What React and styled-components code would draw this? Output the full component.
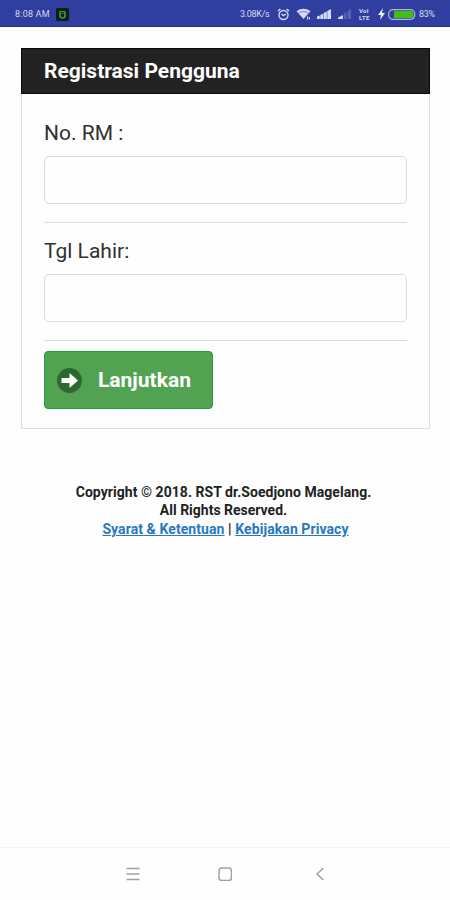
import React from 'react';
import styled, { createGlobalStyle, css } from 'styled-components';

const GlobalStyle = createGlobalStyle`
  * {
    margin: 0;
    padding: 0;
    box-sizing: border-box;
  }

  body {
    background: #fefefe;
    color: #222;
    font-family: Roboto, 'Liberation Sans', sans-serif;
  }
`;

const Screen = styled.div`
  display: flex;
  flex-direction: column;
  height: 900px;
  overflow: hidden;
`;

const StatusBar = styled.header`
  display: flex;
  flex: none;
  align-items: center;
  justify-content: space-between;
  height: 27px;
  padding: 2px 14px 0 15px;
  background: #303f9f;
  border-bottom: 1px solid #26348f;
  color: #d5d9f2;
`;

const StatusGroup = styled.div`
  display: flex;
  align-items: center;
`;

const StatusText = styled.span`
  width: ${props => props.$width}px;
  margin-left: ${props => props.$gap || 0}px;
  font-size: 9px;
  line-height: 12px;
  letter-spacing: ${props => props.$spacing || 0}px;
  white-space: nowrap;
`;

const StatusIcon = styled.svg`
  display: block;
  flex: none;
  margin-left: ${props => props.$gap || 0}px;
`;

const NetworkType = styled.span`
  display: flex;
  flex-direction: column;
  width: 13px;
  margin-left: 7px;
  font-size: 6px;
  font-weight: 700;
  line-height: 7px;
  letter-spacing: 0.3px;
`;

const Content = styled.main`
  flex: 1;
  padding: 21px 20px 0 21px;
`;

const Card = styled.section`
  height: 381px;
  border: 1px solid #dedede;
  border-top: none;
  border-radius: 1px;
`;

const CardHeader = styled.h1`
  height: 46px;
  margin: 0 -1px;
  padding-left: 22px;
  background: #222;
  border: 1px solid #090909;
  color: #fff;
  font-size: 21px;
  font-weight: 700;
  line-height: 45px;
`;

const Form = styled.form`
  padding: 27px 22px 0;
`;

const Label = styled.label`
  display: block;
  height: 26px;
  margin-bottom: 9px;
  color: #303030;
  font-size: 21px;
  line-height: 25px;
`;

const Input = styled.input`
  display: block;
  width: 100%;
  height: 48px;
  padding: 0 10px;
  background: #fefefe;
  border: 1px solid #dbdbdb;
  border-radius: 5px;
  font: inherit;
  outline: none;
`;

const Divider = styled.hr`
  height: 1px;
  margin: 18px 0 ${props => props.$after}px;
  border: none;
  background: #dcdcdc;
`;

const Button = styled.button`
  display: flex;
  align-items: center;
  width: 169px;
  height: 58px;
  padding: 0 12px;
  background: #51a351;
  border: 1px solid #1c9f46;
  border-radius: 4px;
  color: #fff;
  font-family: inherit;
  font-size: 21px;
  font-weight: 700;
`;

const ButtonIcon = styled.svg`
  flex: none;
  margin-right: 16px;
`;

const Footer = styled.footer`
  margin: 54px 0 0 -4px;
  color: #222;
  font-size: 14px;
  font-weight: 700;
  line-height: 18.4px;
  text-align: center;
  white-space: nowrap;
`;

const FooterLine = styled.p`
  letter-spacing: ${props => props.$spacing || 0}px;
  ${props => props.$shift && css`
    padding-left: ${props.$shift}px;
  `}
`;

const Link = styled.a`
  color: #2878c0;
  text-decoration: underline;
`;

const NavBar = styled.nav`
  display: grid;
  flex: none;
  grid-template-columns: 90px 95px 95px;
  justify-content: center;
  justify-items: center;
  align-items: center;
  height: 53px;
  padding-left: 5px;
  border-top: 1px solid #f2f2f2;
`;

const NavIcon = styled.svg`
  display: block;
  fill: none;
  stroke: #a0a0a0;
  stroke-width: 1.5;
`;

function App() {
  return (
    <>
      <GlobalStyle />
      <Screen>
        <StatusBar>
          <StatusGroup>
            <StatusText $width={41} $spacing={0.2}>8:08 AM</StatusText>
            <StatusIcon width="13" height="13" viewBox="0 0 13 13">
              <rect width="13" height="13" rx="1.5" fill="#101c18" />
              <path d="M4 3.5v4a2.5 2.5 0 0 0 5 0v-4" fill="none" stroke="#3aa12d" strokeWidth="1.6" />
              <path d="M4 3.5h5M5.5 5.5h2" stroke="#3aa12d" />
            </StatusIcon>
          </StatusGroup>

          <StatusGroup>
            <StatusText $width={32} $spacing={-0.3}>3.08K/s</StatusText>
            {/* alarm */}
            <StatusIcon $gap={5} width="13" height="13" viewBox="0 0 13 13" fill="none" stroke="#d5d9f2" strokeWidth="1.4">
              <circle cx="6.5" cy="7" r="4.5" />
              <path d="M4.5 6l2 1.6L9 6M1 3l2.4-2M12 3L9.6 1" />
            </StatusIcon>
            {/* wifi */}
            <StatusIcon $gap={6} width="16" height="14" viewBox="0 0 16 14" fill="#d5d9f2">
              <path d="M.5 4.2C4.8.9 10.2.9 14.5 4.2L7.5 12z" />
              <path d="M2.5 6.3c3-2.3 7-2.3 10 0" fill="none" stroke="#7580c0" />
              <path d="M11 9.5h1.2v3H11zM13 10h1v2.5h-1z" />
            </StatusIcon>
            {/* signal, both sims */}
            <StatusIcon $gap={5} width="15" height="12" viewBox="0 0 15 12" fill="#d5d9f2">
              <path d="M0 11V8.5L2.8 7.5V11zM3.3 11V7L6.3 5.5V11zM6.8 11V5L9.8 3.5V11zM10.3 11V3L14 1V11z" />
            </StatusIcon>
            <StatusIcon $gap={6} width="14" height="12" viewBox="0 0 14 12" fill="#d5d9f2">
              <path d="M0 11V9.5L5 7v4z" />
              <path d="M6 11V5.5L8.5 4v7zM9.5 11V3.5L13 1v10z" fill="#5663b2" />
            </StatusIcon>
            <NetworkType>
              <span>VoI</span>
              <span>LTE</span>
            </NetworkType>
            <StatusIcon $gap={6} width="8" height="12" viewBox="0 0 8 12" fill="#f1f2fc">
              <path d="M5 0L0 7h3L2 12l5-7H4z" />
            </StatusIcon>
            <StatusIcon $gap={2} width="28" height="11" viewBox="0 0 28 11">
              <rect x=".7" y=".7" width="26" height="9.6" rx="4" fill="#303f9f" stroke="#aeb5df" strokeWidth="1.2" />
              <path d="M6 2h17.5a2 2 0 0 1 2 2v3a2 2 0 0 1-2 2H6z" fill="#43bf0d" />
            </StatusIcon>
            <StatusText $width={17} $gap={3} $spacing={-0.3}>83%</StatusText>
          </StatusGroup>
        </StatusBar>

        <Content>
          <Card>
            <CardHeader>Registrasi Pengguna</CardHeader>
            <Form>
              <Label htmlFor="no-rm">No. RM :</Label>
              <Input id="no-rm" type="text" />
              <Divider $after={16} />
              <Label htmlFor="tgl-lahir">Tgl Lahir:</Label>
              <Input id="tgl-lahir" type="text" />
              <Divider $after={10} />
              <Button type="button">
                <ButtonIcon width="25" height="25" viewBox="0 0 25 25">
                  <circle cx="12.5" cy="12.5" r="12.5" fill="#2d692f" />
                  <path d="M4.5 10h8V5l8.5 7.5-8.5 7.5v-5h-8z" fill="#fff" />
                </ButtonIcon>
                Lanjutkan
              </Button>
            </Form>
          </Card>

          <Footer>
            <FooterLine $spacing={0.05}>Copyright © 2018. RST dr.Soedjono Magelang.</FooterLine>
            <FooterLine>All Rights Reserved.</FooterLine>
            <FooterLine $spacing={0.08} $shift={4}>
              <Link href="#syarat">Syarat &amp; Ketentuan</Link> | <Link href="#privacy">Kebijakan Privacy</Link>
            </FooterLine>
          </Footer>
        </Content>

        <NavBar>
          <NavIcon width="14" height="14" viewBox="0 0 14 14">
            <path d="M.5 1.5h13M.5 7h13M.5 12.5h13" />
          </NavIcon>
          <NavIcon width="14" height="14" viewBox="0 0 14 14">
            <rect x="1" y="1" width="12.5" height="12.5" rx="3" />
          </NavIcon>
          <NavIcon width="14" height="14" viewBox="0 0 14 14">
            <path d="M10.5 1L4 7l6.5 6" />
          </NavIcon>
        </NavBar>
      </Screen>
    </>
  );
}

export default App;
